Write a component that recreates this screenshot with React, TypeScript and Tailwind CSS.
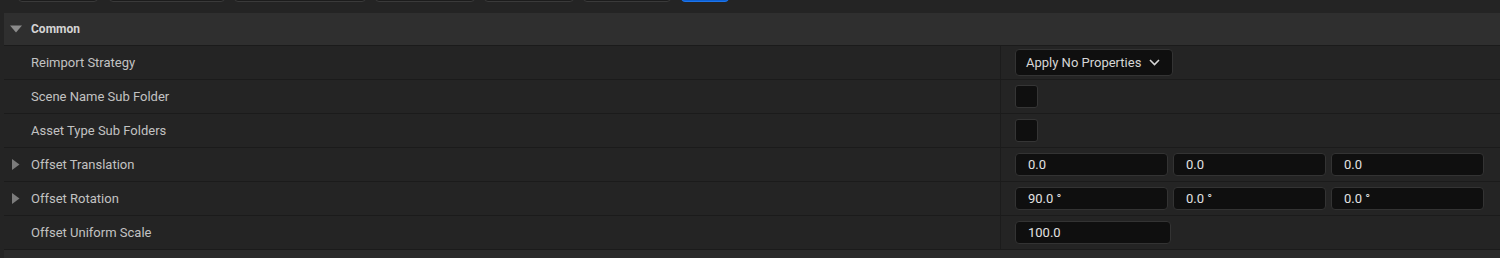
import React from 'react';

const toolbarButtons = [
  { w: 80, ml: 'ml-[18px]', blue: false },
  { w: 116, ml: 'ml-[11px]', blue: false },
  { w: 132, ml: 'ml-[9px]', blue: false },
  { w: 100, ml: 'ml-[9px]', blue: false },
  { w: 90, ml: 'ml-[9px]', blue: false },
  { w: 88, ml: 'ml-[9px]', blue: false },
  { w: 48, ml: 'ml-[10px]', blue: true },
];

const Caret: React.FC<{ open?: boolean }> = ({ open }) =>
  open ? (
    <svg width="12" height="8" viewBox="0 0 12 8" className="shrink-0">
      <path d="M0 0.5 L12 0.5 L6 7.5 Z" fill="#8c8c8c" />
    </svg>
  ) : (
    <svg width="8" height="11" viewBox="0 0 8 11" className="shrink-0">
      <path d="M0 0 L7.5 5.5 L0 11 Z" fill="#7c7c7c" />
    </svg>
  );

const NumberBox: React.FC<{ value: string; wide?: boolean }> = ({ value, wide }) => (
  <div
    className={`h-[23px] ${wide ? 'w-[156px]' : 'w-[153px]'} flex items-center px-3 bg-[#0f0f0f] border border-[#333333] rounded-[4px] text-[13px] text-[#e2e2e2]`}
  >
    {value}
  </div>
);

type Row = {
  label: string;
  expandable?: boolean;
  value: React.ReactNode;
};

const rows: Row[] = [
  {
    label: 'Reimport Strategy',
    value: (
      <div className="h-[27px] w-[158px] flex items-center gap-[8px] pl-[10px] bg-[#0f0f0f] border border-[#333333] rounded-[4px] text-[13px] text-[#d6d6d6]">
        Apply No Properties
        <svg width="11" height="7" viewBox="0 0 11 7">
          <path d="M1 1 L5.5 5.5 L10 1" stroke="#d6d6d6" strokeWidth="1.6" fill="none" />
        </svg>
      </div>
    ),
  },
  {
    label: 'Scene Name Sub Folder',
    value: <div className="w-[23px] h-[23px] bg-[#0f0f0f] border border-[#353535] rounded-[3px]" />,
  },
  {
    label: 'Asset Type Sub Folders',
    value: <div className="w-[23px] h-[23px] bg-[#0f0f0f] border border-[#353535] rounded-[3px]" />,
  },
  {
    label: 'Offset Translation',
    expandable: true,
    value: (
      <div className="flex gap-[5px]">
        <NumberBox value="0.0" />
        <NumberBox value="0.0" />
        <NumberBox value="0.0" />
      </div>
    ),
  },
  {
    label: 'Offset Rotation',
    expandable: true,
    value: (
      <div className="flex gap-[5px]">
        <NumberBox value="90.0 °" />
        <NumberBox value="0.0 °" />
        <NumberBox value="0.0 °" />
      </div>
    ),
  },
  {
    label: 'Offset Uniform Scale',
    value: <NumberBox value="100.0" wide />,
  },
];

const App: React.FC = () => {
  return (
    <div
      className="w-[1500px] h-[258px] overflow-hidden bg-[#242424] flex flex-col"
      style={{ fontFamily: 'Roboto, "Noto Sans", sans-serif' }}
    >
      {/* toolbar strip, buttons cut off by the top edge */}
      <div className="h-[13px] shrink-0 flex items-start bg-[#242424]">
        {toolbarButtons.map((b, i) => (
          <div
            key={i}
            style={{ width: b.w }}
            className={`${b.ml} h-[20px] -mt-[18px] rounded-[4px] ${
              b.blue ? 'bg-[#0b5fd3] border border-[#1e74e8]' : 'bg-[#1c1c1c] border border-[#3a3a3a]'
            }`}
          />
        ))}
      </div>

      <div className="ml-[4px] flex flex-col">
        {/* section header */}
        <div className="h-[33px] flex items-center gap-[9px] pl-[6px] bg-[#2f2f2f] border-b border-[#1b1b1b]">
          <Caret open />
          <span className="text-[12px] font-bold text-[#d4d4d4]">Common</span>
        </div>

        {rows.map((r) => (
          <div key={r.label} className="h-[34px] flex border-b border-[#1b1b1b] bg-[#242424]">
            <div className="w-[997px] flex items-center border-r border-[#1c1c1c]">
              <div className="w-[27px] flex pl-[8px]">
                {r.expandable && <Caret />}
              </div>
              <span className="text-[13px] text-[#c2c2c2]">{r.label}</span>
            </div>
            <div className="flex-1 flex items-center pl-[14px]">{r.value}</div>
          </div>
        ))}
      </div>

      <div className="flex-1 bg-[#2a2a2a] ml-[4px]" />
    </div>
  );
};

export default App;
